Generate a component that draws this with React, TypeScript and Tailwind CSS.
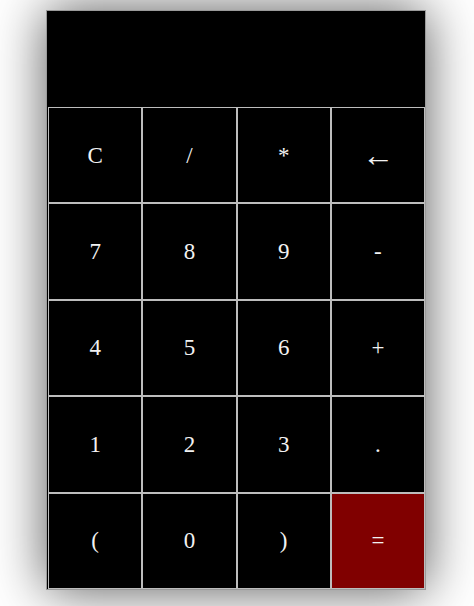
const keys = [
  "C", "/", "*", "←",
  "7", "8", "9", "-",
  "4", "5", "6", "+",
  "1", "2", "3", ".",
  "(", "0", ")", "=",
];

export default function App() {
  return (
    <div className="min-h-[606px] bg-white pt-[10px] pl-[46px]" style={{ fontFamily: '"Liberation Serif", "Times New Roman", serif' }}>
      <div className="w-[380px] bg-black shadow-[0_0_50px_rgba(0,0,0,0.65)] border border-[#9a9a9a]">
        {/* display */}
        <div className="h-[96px] bg-black" />

        {/* keypad */}
        <div className="ml-px grid grid-cols-4">
          {keys.map((k) => (
            <button
              key={k}
              className={
                "h-[96.4px] border border-[#bdbdbd] text-[#f2f2f2] flex items-center justify-center leading-none " +
                (k === "←" ? "text-[32px] font-light " : "text-[23px] ") +
                (k === "=" ? "bg-[#800000]" : "bg-black")
              }
            >
              {k}
            </button>
          ))}
        </div>
      </div>
    </div>
  );
}
